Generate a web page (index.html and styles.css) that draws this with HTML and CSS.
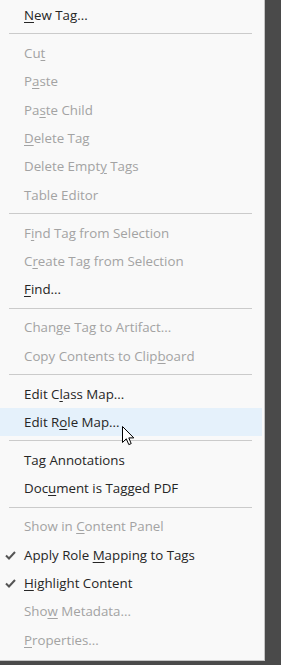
FILE: index.html
```html
<!DOCTYPE html>
<html lang="en">
<head>
  <meta charset="UTF-8" />
  <title>Tags Options Menu</title>
  <link rel="stylesheet" href="styles.css">
</head>
<body>
  <ul class="menu">
    <li class="item"><span class="key">N</span>ew Tag...</li>
    <li class="sep"></li>
    <li class="item off">Cu<span class="key">t</span></li>
    <li class="item off">P<span class="key">a</span>ste</li>
    <li class="item off">Pa<span class="key">s</span>te Child</li>
    <li class="item off"><span class="key">D</span>elete Tag</li>
    <li class="item off">Delete Empt<span class="key">y</span> Tags</li>
    <li class="item off">Table Editor</li>
    <li class="sep"></li>
    <li class="item off">F<span class="key">i</span>nd Tag from Selection</li>
    <li class="item off">C<span class="key">r</span>eate Tag from Selection</li>
    <li class="item"><span class="key">F</span>ind...</li>
    <li class="sep"></li>
    <li class="item off">Chan<span class="key">g</span>e Tag to Artifact...</li>
    <li class="item off">Copy Contents to Clip<span class="key">b</span>oard</li>
    <li class="sep"></li>
    <li class="item">Edit C<span class="key">l</span>ass Map...</li>
    <li class="item hover">Edit R<span class="key">o</span>le Map...
      <svg class="cursor" width="13" height="20" viewBox="0 0 13 20">
        <path d="M0.5 0.5 L0.5 16.5 L4.3 12.8 L6.8 18.6 L9.2 17.6 L6.8 11.9 L11.8 11.9 Z" fill="#fff" stroke="#000" stroke-width="1"/>
      </svg>
    </li>
    <li class="sep"></li>
    <li class="item">Ta<span class="key">g</span> Annotations</li>
    <li class="item">Doc<span class="key">u</span>ment is Tagged PDF</li>
    <li class="sep"></li>
    <li class="item off">Show in <span class="key">C</span>ontent Panel</li>
    <li class="item checked">
      <svg class="check" width="11" height="9" viewBox="0 0 11 9">
        <path d="M1 4.5 L4 7.5 L10 1" fill="none" stroke="#555" stroke-width="2"/>
      </svg>
      Apply Role <span class="key">M</span>apping to Tags
    </li>
    <li class="item checked">
      <svg class="check" width="11" height="9" viewBox="0 0 11 9">
        <path d="M1 4.5 L4 7.5 L10 1" fill="none" stroke="#555" stroke-width="2"/>
      </svg>
      <span class="key">H</span>ighlight Content
    </li>
    <li class="item off">Sho<span class="key">w</span> Metadata...</li>
    <li class="item off"><span class="key">P</span>roperties...</li>
  </ul>
</body>
</html>
```

FILE: styles.css
```css
body {
  margin: 0;
  background: #4a4a4a;
  font-family: "Open Sans", "Noto Sans", sans-serif;
  font-size: 13.3px;
}
.menu {
  list-style: none;
  margin: 0;
  padding: 1px 0 6px;
  width: 264px;
  background: #f9f9f9;
  border-right: 1px solid #c4c4c4;
  border-bottom: 1px solid #c4c4c4;
}
.item {
  position: relative;
  height: 28.33px;
  line-height: 29px;
  padding-left: 24px;
  margin-right: 2px;
  color: #262626;
  white-space: nowrap;
}
.item.off {
  color: #a3a3a3;
}
.item.hover {
  background: #e5f1fb;
}
.key {
  text-decoration: underline;
  text-underline-offset: 2px;
}
.sep {
  height: 1px;
  margin: 4px 12px 4.7px 9px;
  background: #cbcbcb;
}
.check {
  position: absolute;
  left: 5px;
  top: 10px;
}
.cursor {
  position: absolute;
  left: 122px;
  top: 18px;
}
```
